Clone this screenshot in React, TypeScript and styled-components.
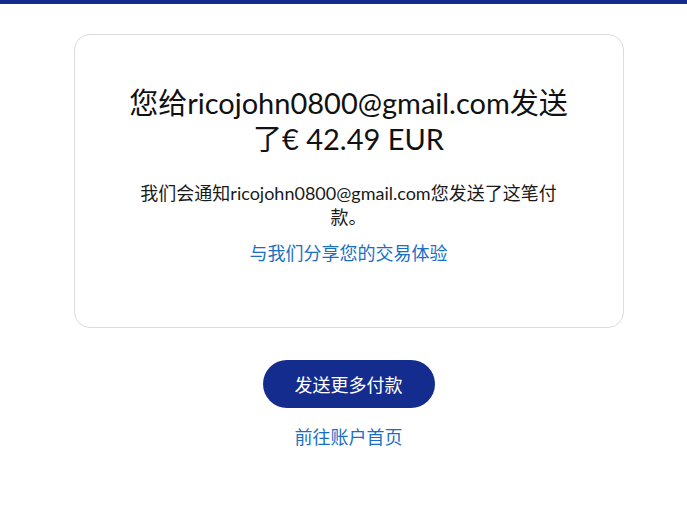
import React from "react";
import styled, { createGlobalStyle } from "styled-components";

const GlobalStyle = createGlobalStyle`
  html, body {
    margin: 0;
    padding: 0;
    background: #ffffff;
  }
  body {
    font-family: Lato, "Noto Sans CJK SC", sans-serif;
    color: #1a1a1a;
  }
`;

const TopBar = styled.div`
  height: 4px;
  background: #142c8e;
`;

const Page = styled.main`
  display: flex;
  flex-direction: column;
  align-items: center;
  padding: 30px 0 0 10px;
`;

const Card = styled.section`
  box-sizing: border-box;
  width: 550px;
  height: 294px;
  border: 1px solid #dcdcdc;
  border-radius: 16px;
  padding: 50px 50px 0;
  display: flex;
  flex-direction: column;
  align-items: center;
  text-align: center;
`;

const Title = styled.h1`
  margin: 0;
  max-width: 445px;
  font-size: 29px;
  line-height: 36px;
  font-weight: 400;
  color: #111111;
`;

const Message = styled.p`
  margin: 24px 0 0;
  max-width: 432px;
  font-size: 18px;
  line-height: 24px;
  color: #1a1a1a;
`;

const TextLink = styled.a<{ gap: number }>`
  display: block;
  margin-top: ${({ gap }) => gap}px;
  font-size: 18px;
  line-height: 24px;
  color: #1a6fc4;
  text-decoration: none;
  cursor: pointer;
`;

const PrimaryButton = styled.button`
  margin-top: 32px;
  width: 172px;
  height: 48px;
  border: none;
  border-radius: 24px;
  background: #142c8e;
  color: #ffffff;
  font-family: inherit;
  font-size: 18px;
  cursor: pointer;
`;

const Actions = styled.div`
  display: flex;
  flex-direction: column;
  align-items: center;
`;

export default function App() {
  return (
    <>
      <GlobalStyle />
      <TopBar />
      <Page>
        <Card>
          <Title>您给ricojohn0800@gmail.com发送了€ 42.49 EUR</Title>
          <Message>我们会通知ricojohn0800@gmail.com您发送了这笔付款。</Message>
          <TextLink gap={12}>与我们分享您的交易体验</TextLink>
        </Card>
        <Actions>
          <PrimaryButton type="button">发送更多付款</PrimaryButton>
          <TextLink gap={17}>前往账户首页</TextLink>
        </Actions>
      </Page>
    </>
  );
}
